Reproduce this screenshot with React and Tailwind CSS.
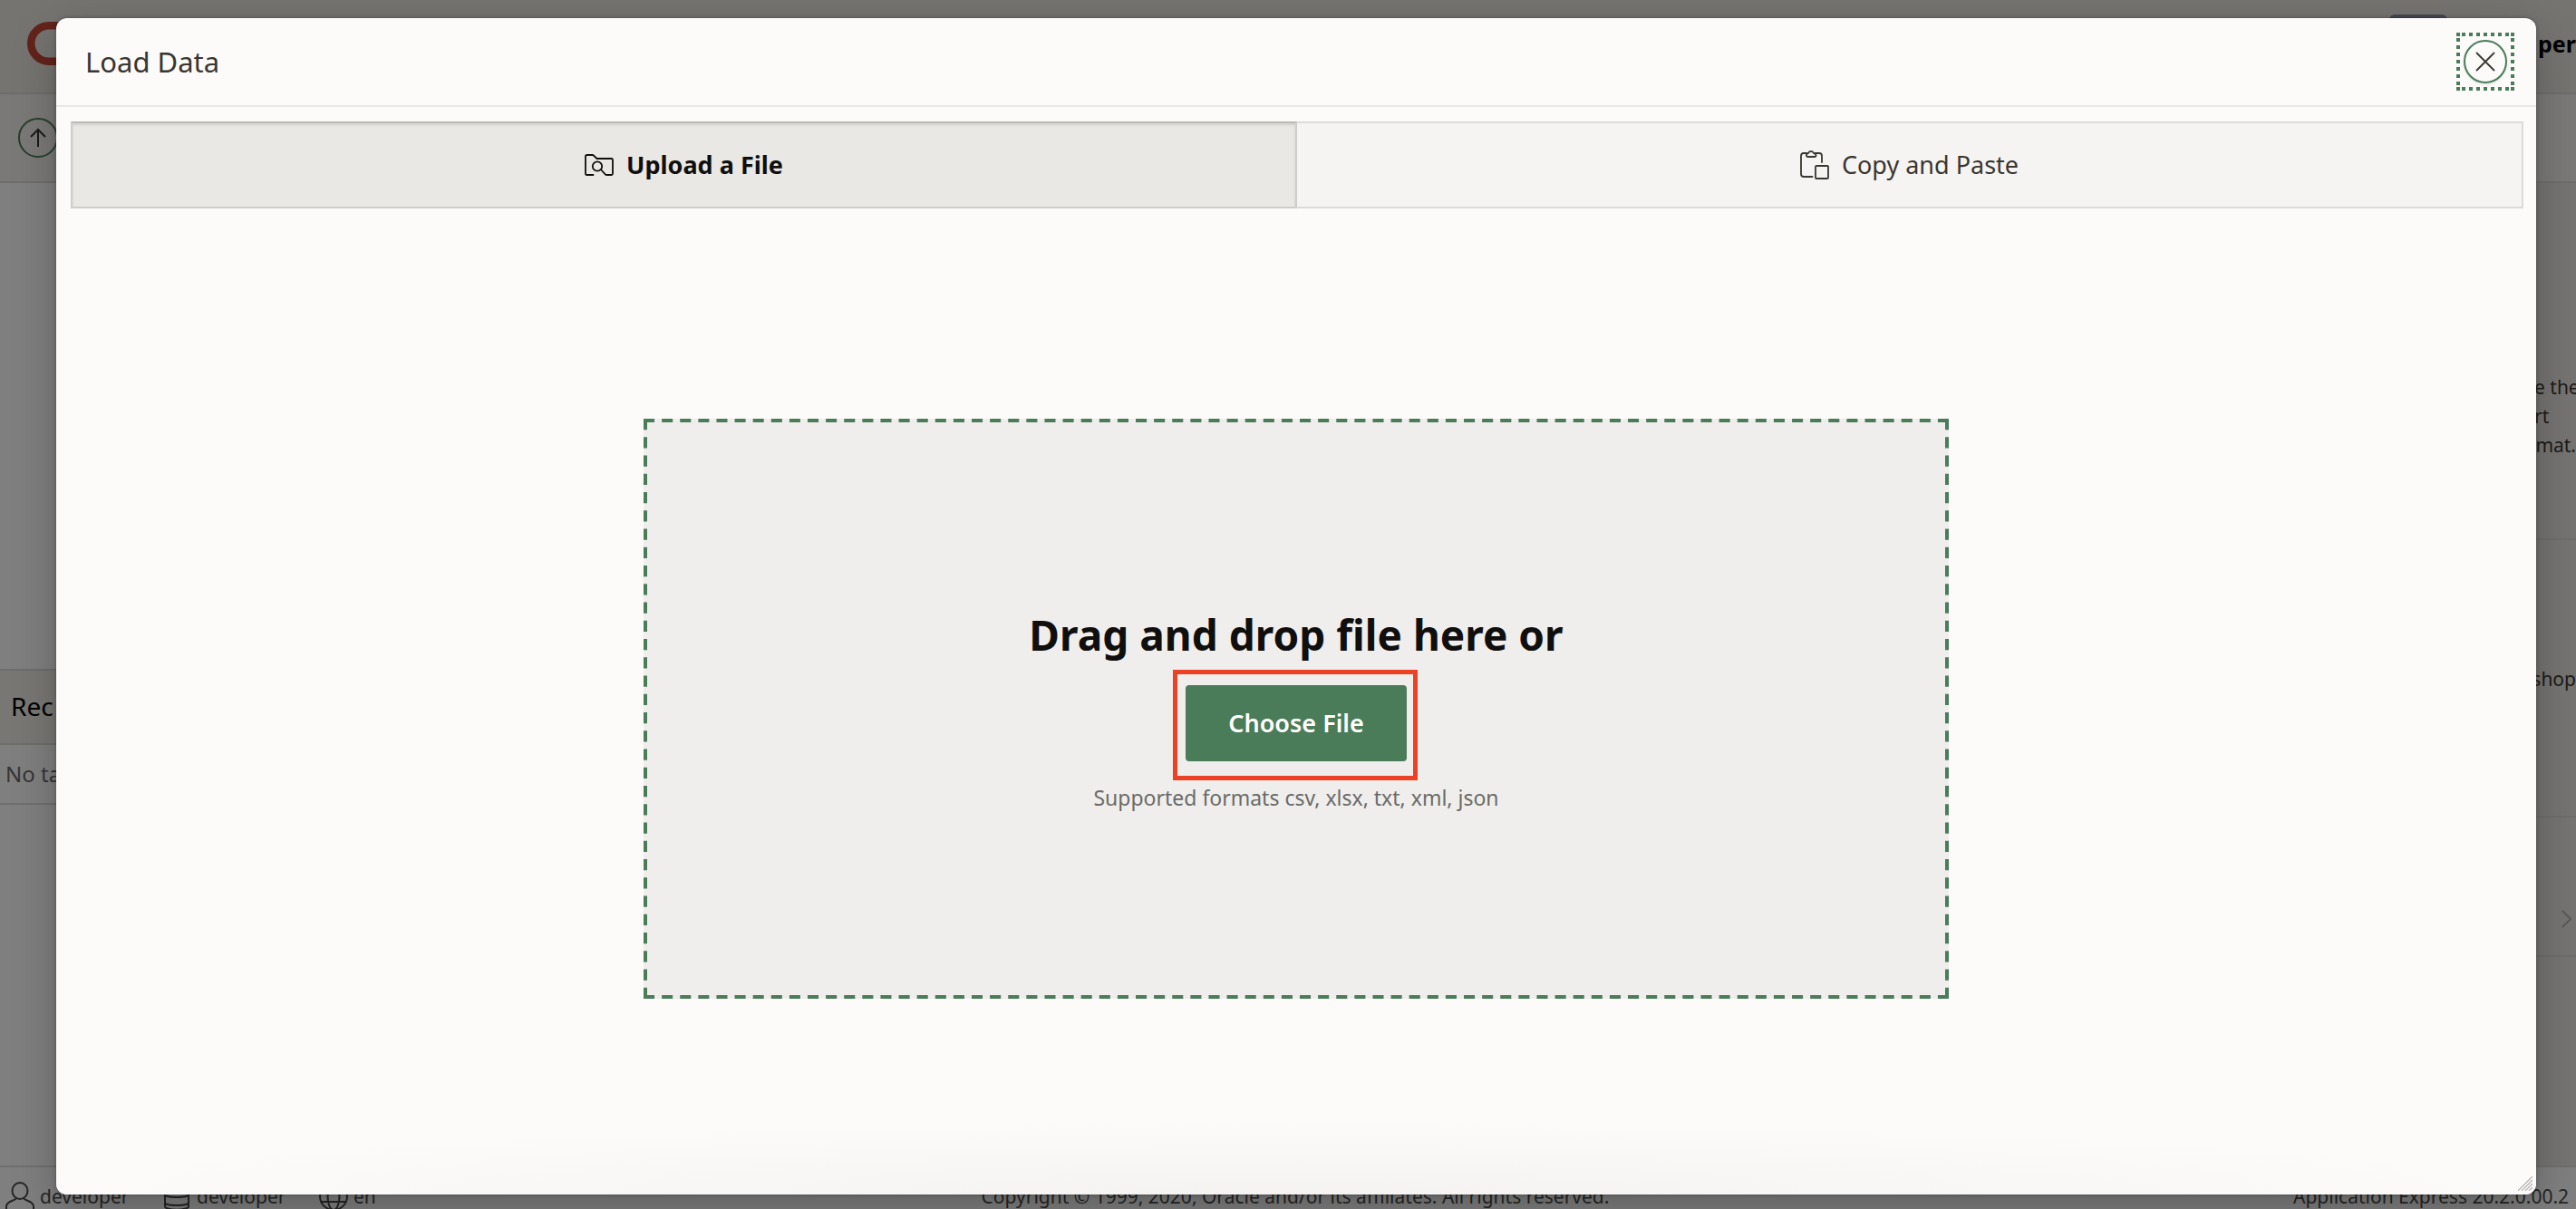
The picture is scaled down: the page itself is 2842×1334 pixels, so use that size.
function FolderSearchIcon() {
  return (
    <svg className="size-8 shrink-0" viewBox="0 0 32 32" fill="none" stroke="currentColor" strokeWidth="1.8" strokeLinecap="round" strokeLinejoin="round" aria-hidden="true">
      <path d="M9.500 27H2.500Q1 27 1 25.500V6.500Q1 5 2.500 5H8.500Q9.500 5 10.300 5.800L13.500 9H29.500Q31 9 31 10.500V25.500Q31 27 29.500 27H24.500Q23.500 27 22.800 26.300L18.300 21.500" />
      <circle cx="14" cy="17.500" r="5.200" />
    </svg>
  );
}

function PasteIcon() {
  return (
    <svg className="size-8 shrink-0" viewBox="0 0 32 32" fill="none" stroke="currentColor" strokeWidth="1.8" strokeLinecap="round" strokeLinejoin="round" aria-hidden="true">
      <path d="M13.500 29H4Q1 29 1 26V6Q1 3 4 3H7M17 3H21Q24 3 24 6V13" />
      <path d="M7 5.500Q7 3 9 3Q9.800 1 12 1Q14.200 1 15 3Q17.500 3 17.500 5.500Q17.500 7 16 7H8.500Q7 7 7 5.500Z" />
      <rect x="17" y="17" width="14" height="14" rx="1" />
    </svg>
  );
}

function UserIcon() {
  return (
    <svg className="size-8 shrink-0" viewBox="0 0 32 32" fill="none" stroke="currentColor" strokeWidth="2" aria-hidden="true">
      <ellipse cx="16" cy="10" rx="8.500" ry="9" />
      <path d="M12 18C11 21 1 21 1 27V31H31V27C31 21 21 21 20 18" />
    </svg>
  );
}

function DatabaseIcon() {
  return (
    <svg className="size-8 shrink-0" viewBox="0 0 32 32" fill="none" stroke="currentColor" strokeWidth="2" aria-hidden="true">
      <ellipse cx="16" cy="5" rx="13" ry="4" />
      <path d="M3 5V27C3 32 29 32 29 27V5M3 14C3 18 29 18 29 14M3 23C3 27 29 27 29 23" />
    </svg>
  );
}

function GlobeIcon() {
  return (
    <svg className="size-8 shrink-0" viewBox="0 0 32 32" fill="none" stroke="currentColor" strokeWidth="2" aria-hidden="true">
      <circle cx="16" cy="16" r="15" />
      <ellipse cx="16" cy="16" rx="6.500" ry="15" />
      <path d="M3 9H29M3 22H29" />
    </svg>
  );
}

function Page() {
  return (
    <div className="flex h-full flex-col overflow-hidden bg-white" aria-hidden="true">
      <header className="flex h-[104px] shrink-0 items-start justify-between border-b-2 border-[#dedbd6] bg-[#ebe8e3]">
        <svg className="mt-6 ml-[30px] h-12 w-[76px]" viewBox="0 0 76 48" fill="none" stroke="#c74634" strokeWidth="8.500">
          <rect x="4.250" y="4.250" width="67.500" height="39.500" rx="19.750" />
        </svg>
        <div className="flex items-start">
          <div className="mt-4 mr-[100px] h-16 w-16 rounded-md bg-[#8a94a8]" />
          <div className="mt-[30px] w-[42px] text-[25px] leading-9 font-bold text-black">per</div>
        </div>
      </header>
      <div className="flex h-[98px] shrink-0 items-center border-b-2 border-[#dedbd6] bg-[#f6f3ef] pl-5">
        <span className="flex size-11 items-center justify-center rounded-full border-2 border-[#4a7c59] text-[#3a3631]">
          <svg className="size-6" viewBox="0 0 24 24" fill="none" stroke="currentColor" strokeWidth="2">
            <path d="M12 22V3M4 11L12 3L20 11" />
          </svg>
        </span>
      </div>
      <div className="flex min-h-0 grow">
        <main className="grow pt-[536px]">
          <div className="flex h-[84px] items-center border-y-2 border-[#dedbd6] bg-[#f1eee9] pb-[2px] pl-3 text-[28px] text-black">Rec</div>
          <div className="flex h-[66px] items-center border-b-2 border-[#dedede] pl-[6px] text-2xl text-[#6b6b6b]">No ta</div>
        </main>
        <aside className="w-[54px] shrink-0 bg-[#ece9e4] text-[21px] leading-8 whitespace-nowrap text-[#3a3631]">
          <div className="h-[394px] border-b-2 border-[#dedbd6] pt-[209px] pl-2">
            <p className="text-right">e the</p>
            <p>rt</p>
            <p className="text-right">mat.</p>
          </div>
          <div className="h-[306px] border-b-2 border-[#dedbd6] pt-[137px] text-right">
            <p>shop</p>
          </div>
          <div className="flex h-[154px] items-end justify-end border-b-2 border-[#dedbd6] pr-1 pb-[30px]">
            <svg className="h-5 w-3" viewBox="0 0 12 20" fill="none" stroke="#b5b2ac" strokeWidth="2">
              <path d="M1 1L10 10L1 19" />
            </svg>
          </div>
        </aside>
      </div>
      <footer className="grid h-12 shrink-0 grid-cols-3 items-start overflow-hidden border-t-2 border-[#dedede] bg-white pt-4 text-[21px] leading-8 whitespace-nowrap text-[#4a4a4a]">
        <div className="flex pl-[6px]">
          <span className="flex w-[173px] gap-[6px]"><UserIcon />developer</span>
          <span className="flex w-[173px] gap-[6px]"><DatabaseIcon />developer</span>
          <span className="flex gap-[6px]"><GlobeIcon />en</span>
        </div>
        <div className="pl-4 text-center">Copyright © 1999, 2020, Oracle and/or its affiliates. All rights reserved.</div>
        <div className="flex justify-end"><span className="w-[312px]">Application Express 20.2.0.00.2</span></div>
      </footer>
    </div>
  );
}

function CloseButton() {
  return (
    <button type="button" aria-label="Close" className="relative flex size-12 items-center justify-center rounded-full border-2 border-[#4a7c59] text-[#3a3631] shadow-sm">
      <svg className="size-6" viewBox="0 0 24 24" fill="none" stroke="currentColor" strokeWidth="1.800" strokeLinecap="round" aria-hidden="true">
        <path d="M2.500 2.500L21.500 21.500M21.500 2.500L2.500 21.500" />
      </svg>
      <svg className="pointer-events-none absolute -inset-[10px] size-16" viewBox="0 0 64 64" fill="none" stroke="#4a7c59" strokeWidth="4" aria-hidden="true">
        <path strokeDasharray="4 4" d="M6 2H58M6 62H58M2 6V58M62 6V58" />
        <path d="M0 2H4M60 2H64M0 62H4M60 62H64" />
      </svg>
    </button>
  );
}

/* Long-dash outline of the drop zone: each side starts and ends on a full dash. */
function DashedOutline() {
  return (
    <svg className="pointer-events-none absolute inset-0 size-full" fill="none" stroke="#4a7c59" strokeWidth="8" strokeDasharray="12 8" aria-hidden="true">
      <line x1="0" y1="0" x2="100%" y2="0" pathLength="1432" />
      <line x1="0" y1="100%" x2="100%" y2="100%" pathLength="1432" />
      <line x1="0" y1="0" x2="0" y2="100%" pathLength="632" />
      <line x1="100%" y1="0" x2="100%" y2="100%" pathLength="632" />
    </svg>
  );
}

export default function App() {
  return (
    <div className="relative h-screen overflow-hidden font-['Noto_Sans',sans-serif]">
      <Page />
      <div className="absolute inset-0 flex bg-black/50 pt-5 pr-11 pb-4 pl-[62px]">
        <section role="dialog" aria-modal="true" aria-labelledby="dialog-title" className="relative flex grow flex-col rounded-xl bg-[#fcfbfa] shadow-[0_16px_48px_rgba(0,0,0,0.25),0_0_4px_rgba(0,0,0,0.3)]">
          <header className="flex h-[98px] shrink-0 items-center justify-between border-b-2 border-[#e8e7e5] px-8">
            <h1 id="dialog-title" className="text-[31px] text-[#3a3631]">Load Data</h1>
            <CloseButton />
          </header>
          <div className="flex grow flex-col rounded-b-xl bg-[radial-gradient(ellipse_50%_80px_at_50%_100%,#f4f3f1,#fcfbfa)] bg-no-repeat p-4">
            <div role="tablist" className="mr-[-2px] grid h-24 shrink-0 grid-cols-2 text-[27px]">
              <button type="button" role="tab" aria-selected="true" className="flex items-center justify-center gap-3.5 border-2 border-[#cfcecb] border-t-[#bbbab7] bg-[#e9e8e4] font-bold text-[#100f0e] shadow-[inset_0_2px_3px_rgba(0,0,0,0.1)]">
                <FolderSearchIcon />
                Upload a File
              </button>
              <button type="button" role="tab" aria-selected="false" className="flex items-center justify-center gap-3.5 border-2 border-l-0 border-[#dcdbd9] bg-[#f5f4f2] text-[#3a3631]">
                <PasteIcon />
                Copy and Paste
              </button>
            </div>
            <div className="flex grow items-center justify-center pt-8">
              <div className="relative flex h-[640px] w-full max-w-[1440px] flex-col items-center bg-[#efeeec] pt-[206px]">
                <DashedOutline />
                <h2 className="text-[46px] leading-[64px] font-bold text-[#100f0e]">Drag and drop file here or</h2>
                <div className="relative mt-6">
                  <button type="button" className="h-[84px] w-[244px] rounded bg-[#4a7c59] text-[27px] font-semibold text-white">Choose File</button>
                  <span className="pointer-events-none absolute -top-[17px] -right-3 -bottom-[21px] -left-[14px] border-[5px] border-[#ec4124]" />
                </div>
                <p className="mt-6 text-[23px] leading-8 text-[#6b6a68]">Supported formats csv, xlsx, txt, xml, json</p>
              </div>
            </div>
          </div>
          <svg className="absolute right-1 bottom-1 size-4" viewBox="0 0 16 16" fill="none" stroke="#b5b4b2" strokeWidth="1.300" aria-hidden="true">
            <path d="M0 16L16 0M4 16L16 4M8 16L16 8M12 16L16 12" />
          </svg>
        </section>
      </div>
    </div>
  );
}
